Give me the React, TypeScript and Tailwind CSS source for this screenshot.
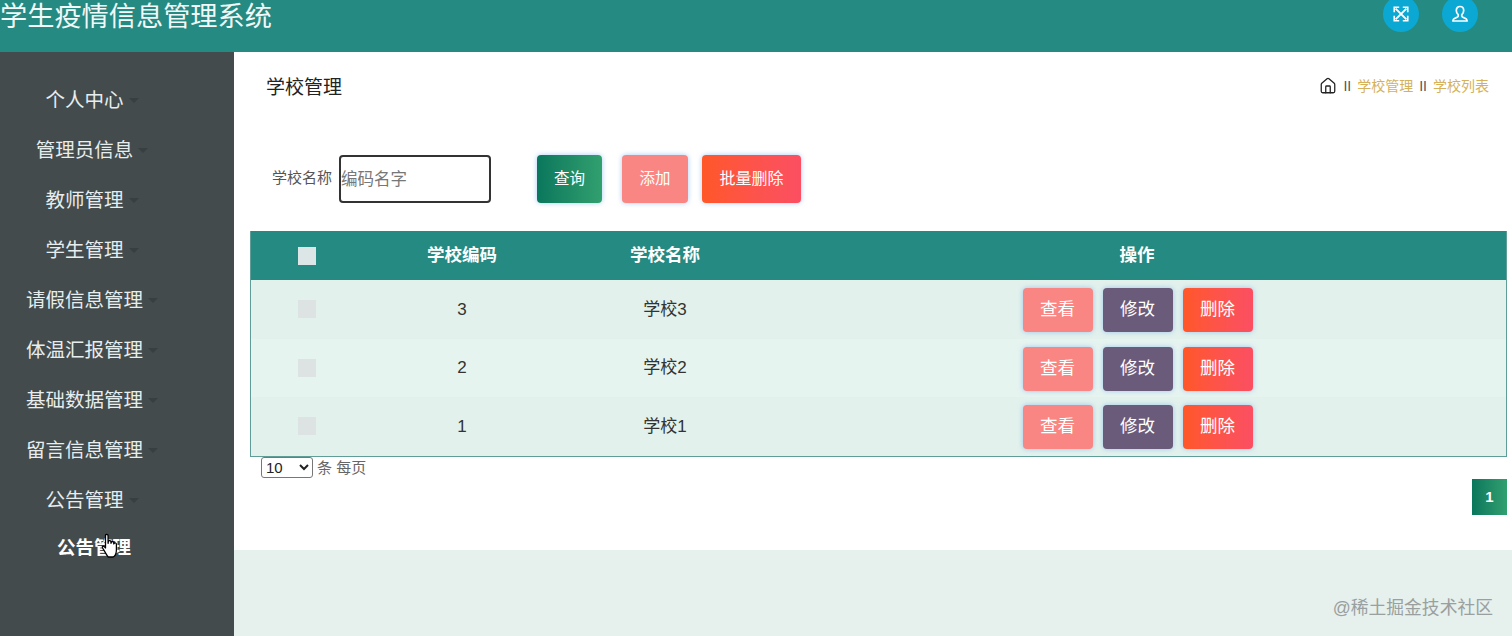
import { Fragment } from "react";
import { House } from "lucide-react";

const menus = ["个人中心", "管理员信息", "教师管理", "学生管理", "请假信息管理", "体温汇报管理", "基础数据管理", "留言信息管理", "公告管理"];
const rows = ["3", "2", "1"];

const rowGrid = "grid grid-cols-[111px_200px_206px_1fr] items-center";
const btn = "flex items-center justify-center rounded-[4px] text-white shadow-[0_0_5px_rgba(110,170,240,0.6)]";

const App = () => {
  return (
    <div className="relative flex h-[636px] flex-col overflow-hidden bg-[#e6f0ed] font-['Liberation_Sans','Noto_Sans_CJK_SC',sans-serif]">
      {/* 顶部 */}
      <header className="flex h-[52px] shrink-0 items-start justify-between bg-[#258a82] pr-[34px]">
        <h1 className="text-[27.200px] leading-[34px] text-[#f2f8f7]">学生疫情信息管理系统</h1>
        <div className="flex -translate-y-[4px] gap-[23px]">
          <button className="flex h-9 w-9 items-center justify-center rounded-full bg-[#0ba8d4]">
            <svg viewBox="0 0 20 20" className="h-[18px] w-[18px]" fill="none" stroke="white" strokeWidth="2">
              <path d="M4 4l12 12M16 4L4 16" />
              <path d="M2.5 8V2.5H8M12 2.5h5.5V8M17.5 12v5.500H12M8 17.500H2.500V12" strokeWidth="1.800" />
            </svg>
          </button>
          <button className="flex h-9 w-9 items-center justify-center rounded-full bg-[#0ba8d4]">
            <svg viewBox="0 0 20 20" className="h-[20px] w-[20px]" fill="none" stroke="white" strokeWidth="1.700">
              <path d="M10 2.500c2.300 0 3.700 1.800 3.700 4 0 1.900-.9 3.300-1.900 4.200v1.500c0 .7 1 1.100 2.500 1.700 1.600.6 2.700 1.200 2.700 2.300v.8H3v-.8c0-1.100 1.100-1.700 2.700-2.300 1.500-.6 2.500-1 2.500-1.700v-1.500c-1-.9-1.900-2.300-1.900-4.200 0-2.200 1.400-4 3.700-4z" />
            </svg>
          </button>
        </div>
      </header>

      <div className="flex min-h-0 flex-1">
        {/* 侧边栏 */}
        <aside className="w-[234px] shrink-0 bg-[#434b4d] pt-[24px]">
          {menus.map((m) => (
            <div key={m} className="flex h-[50px] items-center justify-center pr-[50px] text-[19.500px] text-[#e8eded]">
              <span>{m}</span>
              <span className="ml-[5px] mt-[-2px] h-0 w-0 border-x-[5px] border-t-[5px] border-x-transparent border-t-[#383f41]" />
            </div>
          ))}
          <div className="flex h-[43px] items-center justify-center pr-[46px] text-[18.500px] font-bold text-white">公告管理</div>
        </aside>

        <main className="min-w-0 flex-1">
          <div className="h-[498px] bg-white pl-[16px] pr-[5px]">
            <div className="flex h-[71px] items-center justify-between pl-[16px] pt-[1px]">
              <h2 className="text-[19px] text-[#222]">学校管理</h2>
              <div className="flex -translate-y-[2px] items-center gap-[6px] pr-[18px] text-[14px] text-[#d4b15a]">
                <House className="h-[18px] w-[18px] text-[#222]" strokeWidth={1.700} />
                <span className="text-[#4a5560]">II</span>
                <span>学校管理</span>
                <span className="text-[#4a5560]">II</span>
                <span>学校列表</span>
              </div>
            </div>

            {/* 搜索 */}
            <div className="mt-[32px] flex h-[48px] items-center">
              <span className="ml-[22px] mr-[7px] -translate-y-[1px] text-[15px] text-[#555]">学校名称</span>
              <input
                placeholder="编码名字"
                className="h-[48px] w-[152px] rounded-[4px] border-2 border-[#333] bg-white pl-0 text-[16.500px] outline-none placeholder:text-[#777]"
              />
              <button className={`${btn} ml-[46px] h-[48px] w-[65px] bg-linear-to-r from-[#08775c] to-[#31a06f] text-[15.500px]`}>查询</button>
              <button className={`${btn} ml-[20px] h-[48px] w-[66px] bg-[#f98683] text-[15.500px]`}>添加</button>
              <button className={`${btn} ml-[14px] h-[48px] w-[99px] bg-linear-to-r from-[#ff5726] to-[#fb4f62] text-[16px]`}>批量删除</button>
            </div>

            {/* 表格 */}
            <div className="mt-[28px] border border-t-0 border-[#5f9e98]">
              <div className={`${rowGrid} h-[49px] bg-[#258a82] text-[17.500px] font-bold text-white`}>
                <span className="ml-[47px] h-[18px] w-[18px] bg-[#dde6e6]" />
                <span className="text-center">学校编码</span>
                <span className="text-center">学校名称</span>
                <span className="text-center">操作</span>
              </div>
              {rows.map((r, i) => (
                <Fragment key={r}>
                  <div className={`${rowGrid} h-[58.500px] text-[17px] text-[#333] ${i === 1 ? "bg-[#e6f4f0]" : "bg-[#e2f1ec]"}`}>
                    <span className="ml-[47px] h-[18px] w-[18px] bg-[#dce3e2]" />
                    <span className="text-center">{r}</span>
                    <span className="text-center">学校{r}</span>
                    <div className="flex translate-y-[1px] justify-center gap-[10px] pl-[1px]">
                      <button className={`${btn} h-[44px] w-[70px] bg-[#f98683] pb-[2px] text-[17.500px]`}>查看</button>
                      <button className={`${btn} h-[44px] w-[70px] bg-[#6b5b7b] pb-[2px] text-[17.500px]`}>修改</button>
                      <button className={`${btn} h-[44px] w-[70px] bg-linear-to-r from-[#ff5726] to-[#fb4f62] pb-[2px] text-[17.500px]`}>删除</button>
                    </div>
                  </div>
                </Fragment>
              ))}
            </div>

            <div className="flex items-center gap-[4px] pl-[11px] text-[15px] text-[#666]">
              <select className="h-[21px] w-[52px] rounded-[3px] border border-[#777] bg-white text-[15px] text-[#222]">
                <option>10</option>
              </select>
              <span>条 每页</span>
            </div>
            <div className="flex justify-end">
              <span className="flex h-[36px] w-[35px] items-center justify-center bg-linear-to-r from-[#08775c] to-[#31a06f] text-[15px] font-bold text-white">1</span>
            </div>
          </div>
          <div className="flex justify-end pr-[19px] pt-[45px] text-[17.800px] text-[#9a9f9f]">@稀土掘金技术社区</div>
        </main>
      </div>

      {/* 鼠标指针 */}
      <svg viewBox="0 0 24 28" className="absolute left-[100px] top-[532px] h-[28px] w-[22px]" fill="white" stroke="black" strokeWidth="1.400" strokeLinejoin="round">
        <path d="M6 2.500c0-1.600 2.800-1.600 2.800 0v8.500l.4-2c.4-1.400 2.800-1.100 2.700.4l.1 1.600.4-1c.5-1.300 2.700-.9 2.600.6v1.100l.5-.6c.7-1 2.500-.4 2.400 1V18c0 3.500-1.700 7-3.500 8H9c-1.500-1.600-2.500-3.800-4.800-7.500-.9-1.500-2.200-3-1.700-3.800.7-1 2.300-.3 3.500 1.500z" />
      </svg>
    </div>
  );
};

export default App;
